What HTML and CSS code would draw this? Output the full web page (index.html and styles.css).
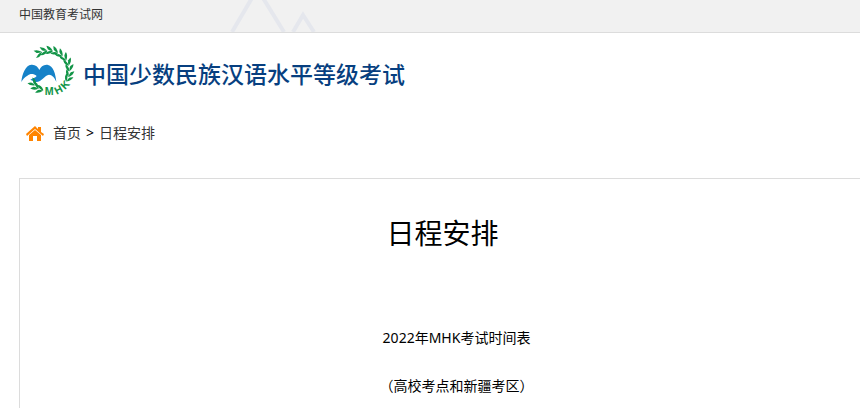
FILE: index.html
```html
<!DOCTYPE html>
<html lang="zh-CN">

<head>
    <meta charset="UTF-8">
    <meta name="viewport" content="width=device-width, initial-scale=1.0">
    <title>日程安排</title>
    <link rel="stylesheet" href="styles.css">
</head>

<body>
    <div class="topbar">
        <a href="/">中国教育考试网</a>
        <svg class="hills" width="90" height="32" viewBox="0 0 90 32" aria-hidden="true">
            <path d="M2 32L22 -2M33 -2L54 32M63 32L73 15L84 32" />
        </svg>
    </div>

    <header>
        <svg class="logo" width="56" height="54" viewBox="30 18 168 162" aria-hidden="true">
            <defs>
                <g id="leaf">
                    <path d="M8 1Q-2 1 -7 -3Q-10 -8 -12 -13Q0 -12 8 1Z" />
                    <path d="M8 1Q0 1 -6 4Q-11 8 -16 9Q-4 16 8 3Z" />
                </g>
            </defs>
            <path class="bird" d="M34 132C36 108 46 82 64 80C76 79 84 86 88 96C92 86 100 79 112 80C130 83 137 108 139 132C134 119 126 110 117 110C104 111 96 132 78 132L72 138L69 129L61 125C68 121 76 120 80 114C70 106 60 107 52 113C44 118 38 124 34 132Z" />
            <g class="wreath">
                <use href="#leaf" transform="rotate(-28 116 98) translate(116 37)" />
                <use href="#leaf" transform="rotate(-12 116 98) translate(116 37)" />
                <use href="#leaf" transform="rotate(4 116 98) translate(116 37)" />
                <use href="#leaf" transform="rotate(20 116 98) translate(116 37)" />
                <use href="#leaf" transform="rotate(36 116 98) translate(116 37)" />
                <use href="#leaf" transform="rotate(52 116 98) translate(116 36)" />
                <use href="#leaf" transform="rotate(68 116 98) translate(116 35)" />
                <use href="#leaf" transform="rotate(84 116 98) translate(116 35)" />
                <use href="#leaf" transform="rotate(100 116 98) translate(116 35)" />
                <use href="#leaf" transform="rotate(114 116 98) translate(116 35)" />
                <use href="#leaf" transform="rotate(203 116 98) translate(116 35) scale(-1 1)" />
                <use href="#leaf" transform="rotate(217 116 98) translate(116 35) scale(-1 1)" />
                <use href="#leaf" transform="rotate(230 116 98) translate(116 38) scale(-1 1)" />
                <text transform="translate(104 171)">M</text>
                <text transform="translate(140 170) rotate(-28)">H</text>
                <text transform="translate(165 156) rotate(-46)">K</text>
            </g>
        </svg>
        <h1>中国少数民族汉语水平等级考试</h1>
    </header>

    <nav>
        <svg width="18" height="16" viewBox="0 0 18 16" aria-hidden="true">
            <path d="M9 1L12 4V2H15V7L18 9L17 11L9 4L1 11L0 9Z" />
            <path d="M9 5L15 10V16H11V11H7V16H3V10Z" />
        </svg>
        <a href="/">首页</a>
        <span>&gt;</span>
        <a href="/">日程安排</a>
    </nav>

    <div class="container">
        <h2>日程安排</h2>
        <p>2022年MHK考试时间表</p>
        <p>（高校考点和新疆考区）</p>
    </div>
</body>

</html>
```
FILE: styles.css
```css
* {
    margin: 0;
    padding: 0;
    box-sizing: border-box;
}

body {
    font-family: "Noto Sans", "Noto Sans CJK SC", sans-serif;
    font-size: 14px;
    line-height: 24px;
    color: #000;
    background: #fff;
    overflow-x: hidden;
}

a {
    text-decoration: none;
    color: #333;
}

.topbar {
    display: flex;
    gap: 127px;
    height: 33px;
    padding-left: 19px;
    font-size: 12px;
    line-height: 30px;
    background: #f1f1f1;
    border-bottom: 1px solid #dcdcdc;
}

.hills {
    fill: none;
    stroke: #e5e7ed;
    stroke-width: 4;
}

header {
    display: flex;
    align-items: center;
    gap: 7px;
    padding: 11px 20px;
}

.bird {
    fill: #1682c8;
}

.wreath {
    fill: #129447;
    font-family: "Liberation Sans", sans-serif;
    font-size: 32px;
    font-weight: bold;
}

h1 {
    padding-top: 6px;
    font-size: 23px;
    font-weight: 500;
    line-height: 32px;
    color: #073f80;
}

nav {
    display: flex;
    align-items: center;
    padding: 12px 26px;
}

nav svg {
    margin-right: 9px;
    fill: #ff8400;
}

nav span {
    margin: 0 5px;
}

/* runs a little past the right edge */
.container {
    margin: 21px -6px 0 19px;
    padding: 32px 0 0;
    border: 1px solid #dcdcdc;
    text-align: center;
}

h2 {
    margin-bottom: 71px;
    font-size: 28px;
    font-weight: normal;
    line-height: 44px;
}

p {
    margin-bottom: 24px;
    text-indent: 28px;
}
```
